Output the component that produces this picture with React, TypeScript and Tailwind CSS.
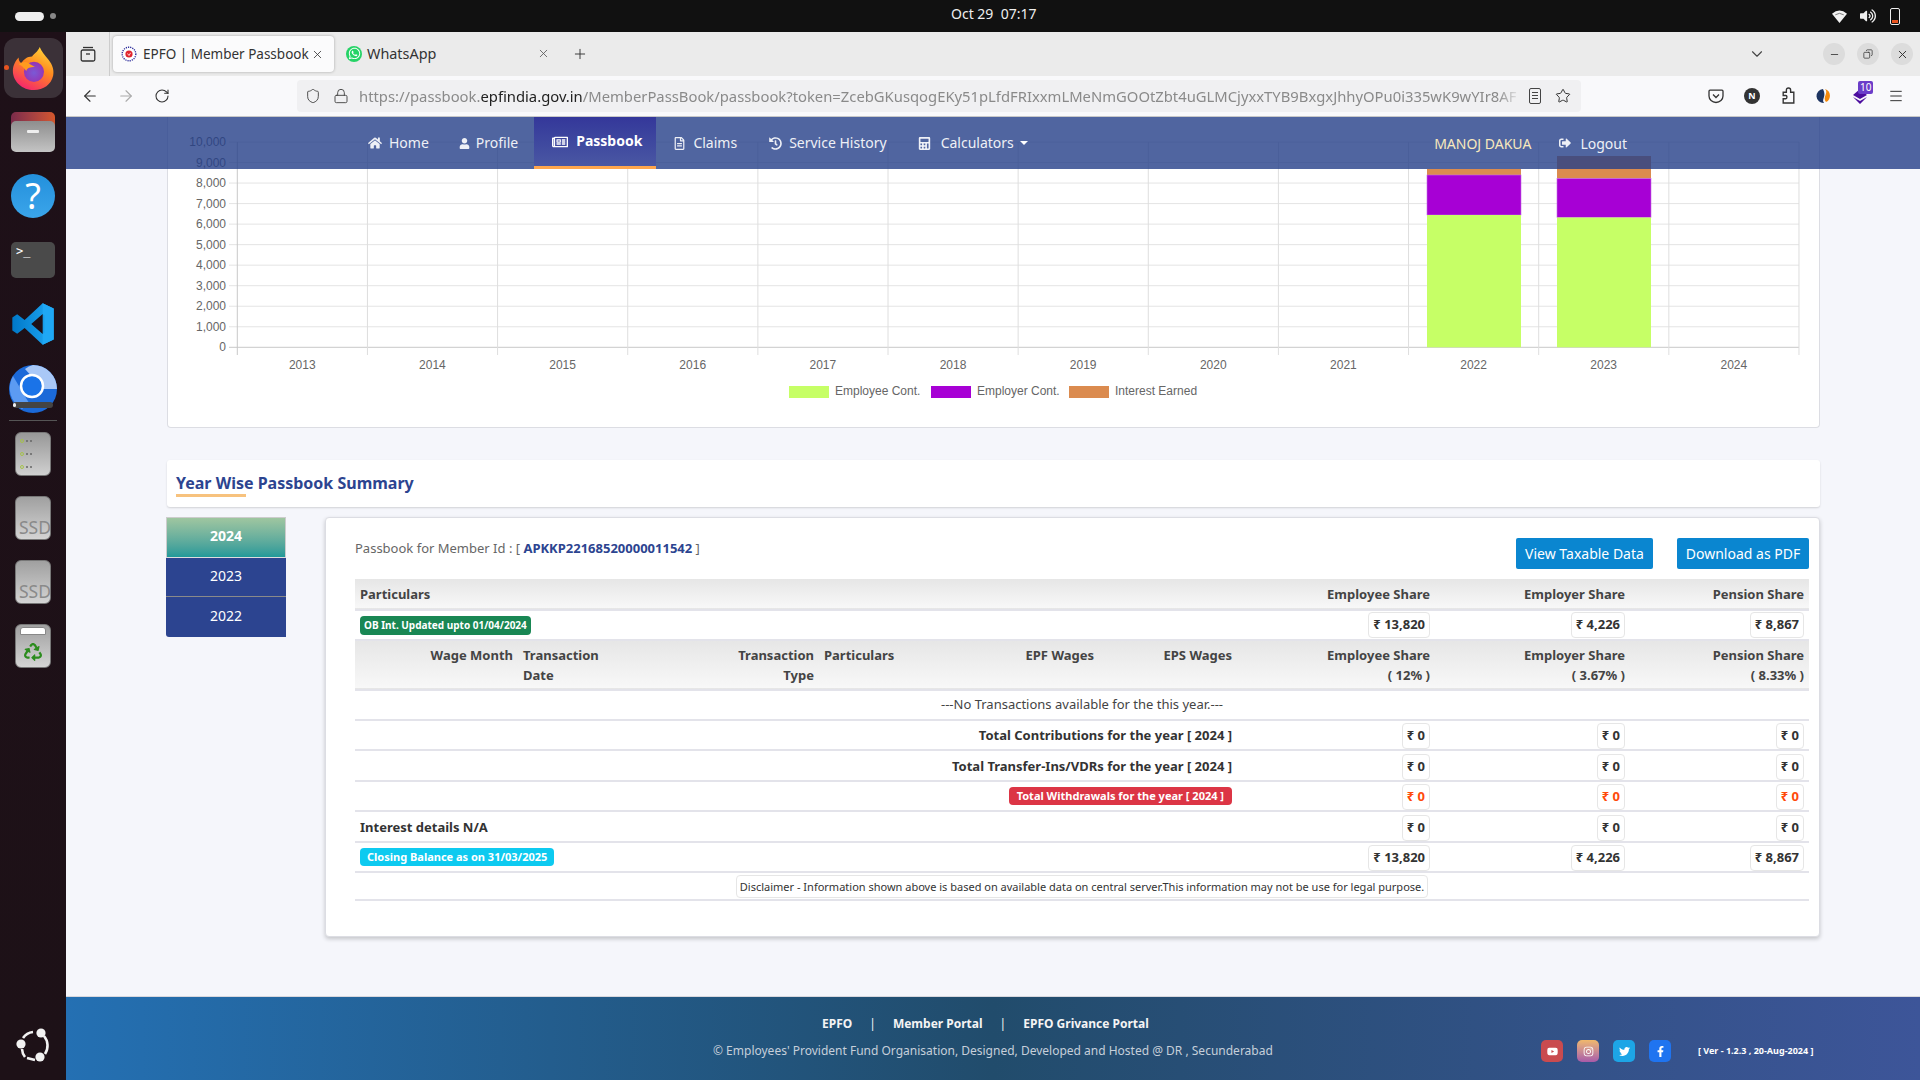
import type { ReactNode } from "react";
import { ArrowLeft, ArrowRight, ChevronDown, Copy, Lock, Menu, Minus, Plus, RotateCw, Shield, Star, X } from "lucide-react";
import {
  FaCalculator,
  FaFacebookF,
  FaHistory,
  FaHome,
  FaInstagram,
  FaRecycle,
  FaRegFileAlt,
  FaRegNewspaper,
  FaSignOutAlt,
  FaTwitter,
  FaUser,
  FaVolumeUp,
  FaWhatsapp,
  FaYoutube,
} from "react-icons/fa";

const years = [2013, 2014, 2015, 2016, 2017, 2018, 2019, 2020, 2021, 2022, 2023, 2024];
const yTicks = [10000, 9000, 8000, 7000, 6000, 5000, 4000, 3000, 2000, 1000, 0];
const bars = [
  { x: 1427, orangeTop: 169, purpleTop: 175, greenTop: 215 },
  { x: 1557, orangeTop: 156, purpleTop: 178.5, greenTop: 217.5 },
];

function FirefoxLogo() {
  return (
    <svg viewBox="0 0 48 48" className="size-[46px]">
      <defs>
        <linearGradient id="ffBody" x1="0.8" y1="0" x2="0.3" y2="1">
          <stop offset="0" stopColor="#ffd93b" />
          <stop offset="0.45" stopColor="#ff8a1f" />
          <stop offset="1" stopColor="#f5246e" />
        </linearGradient>
        <radialGradient id="ffGlobe" cx="0.5" cy="0.55" r="0.6">
          <stop offset="0" stopColor="#7a5ad6" />
          <stop offset="1" stopColor="#9a2fb0" />
        </radialGradient>
      </defs>
      <path d="M31 2c2 5 5 8 9 13 5 6 6 12 5 17-2 9-10 15-20 15C13 47 3 38 3 27c0-6 3-11 6-14 0 3 1 5 3 6 2-4 6-7 11-7 2-3 6-5 8-10z" fill="url(#ffBody)" />
      <circle cx="25" cy="28" r="10.5" fill="url(#ffGlobe)" />
      <path d="M9 20c4-3 9-3 12 0l5 3c-5 0-8 1-9 4-3-4-5-6-8-7z" fill="#ff9b1f" />
    </svg>
  );
}

function VsCodeLogo() {
  return (
    <svg viewBox="0 0 100 100" className="size-[44px]">
      <defs>
        <linearGradient id="vsBlue" x1="0" y1="0" x2="1" y2="0">
          <stop offset="0" stopColor="#0078c8" />
          <stop offset="1" stopColor="#1fa8f5" />
        </linearGradient>
      </defs>
      <path fillRule="evenodd" d="M72 3 L97 15 V85 L72 97 L31 59 L14 72 L3 65 V35 L14 28 L31 41 Z M72 27 L46 50 L72 73 Z" fill="url(#vsBlue)" />
      <path d="M72 3 L97 15 V85 L72 97 Z M72 27 V73 L76 70 V30 Z" fillRule="evenodd" fill="#1fa8f5" />
    </svg>
  );
}

function ChromiumLogo() {
  return (
    <svg viewBox="0 0 48 48" className="size-[48px]">
      <circle cx="24" cy="24" r="24" fill="#1b69d8" />
      <path d="M24 0a24 24 0 0 1 24 24H34L16 4a24 24 0 0 1 8-4z" fill="#a9c8f7" />
      <path d="M4 11 L20 38 L13 44 A24 24 0 0 1 4 11z" fill="#5c9bf2" />
      <circle cx="23" cy="21" r="11" fill="#1a73e8" stroke="#fff" strokeWidth="2.5" />
      <rect x="4" y="37" width="40" height="6" rx="3" fill="#444" />
      <rect x="4" y="38" width="3" height="4" rx="1.5" fill="#eee" />
    </svg>
  );
}

function UbuntuLogo() {
  return (
    <svg viewBox="0 0 36 36" className="size-[36px]">
      <g fill="none" stroke="#f2f2f2" strokeWidth="2.6">
        <path d="M8 11 A14 14 0 0 1 18 5" />
        <path d="M29 9 A15 15 0 0 1 30 27" />
        <path d="M10 30 A14 14 0 0 1 7 22" />
        <path d="M12 31 L20 33" />
      </g>
      <circle cx="26" cy="6" r="4.6" fill="#f2f2f2" />
      <circle cx="6" cy="17" r="4.6" fill="#f2f2f2" />
      <circle cx="25" cy="30" r="4.6" fill="#f2f2f2" />
    </svg>
  );
}

function Drive({ children }: { children?: ReactNode }) {
  return (
    <div className="relative mt-[20px] h-[44px] w-[36px] overflow-hidden rounded-[6px] border border-[#777] bg-gradient-to-b from-[#a0a0a0] to-[#d4d4d4]">
      {children}
    </div>
  );
}

function Dock() {
  return (
    <aside className="flex w-[66px] shrink-0 flex-col items-center bg-gradient-to-b from-[#1e1018] to-[#1d1117]">
      <div className="relative mt-[6px] flex h-[60px] w-[59px] items-center justify-center rounded-[12px] bg-[#3b3138]">
        <FirefoxLogo />
        <span className="absolute left-0 top-[27px] size-[5px] rounded-full bg-[#e95420]" />
      </div>
      <div className="relative mt-[14px] h-[40px] w-[44px]">
        <div className="h-[20px] rounded-t-[5px] bg-gradient-to-r from-[#7b2b4a] to-[#d4572b]" />
        <div className="absolute inset-x-0 bottom-0 top-[9px] flex justify-center rounded-[5px] bg-gradient-to-b from-[#8e8e8e] to-[#c4c4c4]">
          <span className="mt-[9px] h-[3px] w-[12px] rounded-[1px] bg-[#eee]" />
        </div>
      </div>
      <div className="mt-[22px] flex size-[44px] items-center justify-center rounded-full bg-gradient-to-b from-[#2390dc] to-[#3aa5ea] text-[36px] leading-none text-white">?</div>
      <div className="mt-[24px] h-[36px] w-[44px] rounded-[5px] bg-[#4a4a4a] pl-[5px] pt-[2px] font-['DejaVu_Sans_Mono',monospace] text-[12px] leading-[14px] text-white">&gt;_</div>
      <div className="mt-[24px]">
        <VsCodeLogo />
      </div>
      <div className="mt-[19px]">
        <ChromiumLogo />
      </div>
      <div className="mt-[7px] h-px w-[48px] bg-[#555]" />
      <div className="mt-[11px] flex h-[44px] w-[36px] flex-col justify-between rounded-[6px] border border-[#777] bg-gradient-to-b from-[#989898] to-[#d0d0d0] px-[4px] py-[6px]">
        {[0, 1, 2].map((n) => (
          <div key={n} className="flex items-center gap-[2px]">
            <span className="size-[4px] rounded-full border border-[#a6c34a]" />
            <span className="size-[2px] rounded-full bg-[#666]" />
            <span className="size-[2px] rounded-full bg-[#666]" />
          </div>
        ))}
      </div>
      {[0, 1].map((n) => (
        <Drive key={n}>
          <span className="absolute bottom-[1px] left-[3px] text-[17.5px] leading-[22px] text-[#8a8a8a]">SSD</span>
        </Drive>
      ))}
      <Drive>
        <div className="mx-[4px] mt-[2px] h-[8px] rounded-t-[3px] border border-[#888] bg-white" />
        <div className="mt-[8px] flex justify-center">
          <FaRecycle className="size-[18px] text-[#2c8c1e]" />
        </div>
      </Drive>
      <div className="mb-[17px] mt-auto">
        <UbuntuLogo />
      </div>
    </aside>
  );
}

function TopBar() {
  return (
    <header className="relative flex h-[32px] shrink-0 items-center justify-between bg-[#111] pl-[15px] pr-[20px]">
      <div className="flex items-center gap-[6px]">
        <span className="h-[9px] w-[29px] rounded-full bg-[#eee]" />
        <span className="size-[6px] rounded-full bg-[#888]" />
      </div>
      <span className="absolute left-[951px] top-[4px] text-[14px] leading-[20px] text-[#eee]">Oct 29&nbsp;&nbsp;07:17</span>
      <div className="flex items-center gap-[12px] text-[#eee]">
        <svg viewBox="0 0 18 16" className="h-[15px] w-[17px]">
          <path d="M1 5 Q9 -2 17 5 L9 15 Z" fill="#f2f2f2" />
          <path d="M4.5 6.2 Q9 3 13.5 6.2" fill="none" stroke="#555" strokeWidth="0.8" />
        </svg>
        <FaVolumeUp className="size-[16px]" />
        <div className="ml-[2px] flex h-[17px] w-[10px] flex-col justify-end rounded-[2px] border border-[#eee] p-px">
          <span className="h-[3px] bg-[#e95420]" />
        </div>
      </div>
    </header>
  );
}

function EpfoFavicon() {
  return (
    <svg viewBox="0 0 16 16" className="size-[16px] shrink-0">
      <circle cx="8" cy="8" r="6.8" fill="#fff" stroke="#2a2a9a" strokeWidth="1.4" strokeDasharray="1.2 1" />
      <circle cx="8" cy="8" r="3.6" fill="#e0242e" />
      <path d="M6.5 7.5 L8 9.5 L9.6 6.8" fill="none" stroke="#fff" strokeWidth="0.8" />
    </svg>
  );
}

function WindowButton({ children }: { children: ReactNode }) {
  return <span className="flex size-[22px] items-center justify-center rounded-full bg-[#dcdcdc] text-[#333]">{children}</span>;
}

function TabStrip() {
  return (
    <div className="flex h-[44px] shrink-0 items-center bg-[#ebebeb] text-[14px] text-[#333]">
      <div className="flex h-full w-[44px] items-center justify-center border-r border-[#ccc]">
        <svg viewBox="0 0 16 16" className="size-[16px]" fill="none" stroke="#333" strokeWidth="1.3">
          <path d="M3 1.5 H13" />
          <rect x="1.2" y="4" width="13.6" height="11" rx="1.5" />
          <path d="M6 8 H10" />
        </svg>
      </div>
      <div className="relative ml-[3px] flex h-[36px] w-[221px] items-center rounded-[4px] bg-[#fbfbfc] pl-[8px] shadow-[0_0_3px_rgba(0,0,0,0.3)]">
        <EpfoFavicon />
        <span className="ml-[6px] w-[167px] whitespace-nowrap text-[13.5px]">EPFO | Member Passbook</span>
        <X className="ml-[1px] size-[13px] shrink-0" strokeWidth={1.5} />
      </div>
      <div className="flex w-[221px] items-center pl-[12px]">
        <span className="flex size-[16px] items-center justify-center rounded-full bg-[#25d366] text-white">
          <FaWhatsapp className="size-[13px]" />
        </span>
        <span className="ml-[5px] w-[170px] text-[14.4px]">WhatsApp</span>
        <X className="size-[13px] text-[#555]" strokeWidth={1.5} />
      </div>
      <Plus className="ml-[17px] size-[16px]" strokeWidth={1.4} />
      <ChevronDown className="ml-[1160px] size-[18px] text-[#444]" strokeWidth={1.5} />
      <div className="ml-[57px] flex gap-[12px]">
        <WindowButton>
          <Minus className="size-[11px]" strokeWidth={1.8} />
        </WindowButton>
        <WindowButton>
          <Copy className="size-[10px] -scale-x-100" strokeWidth={1.8} />
        </WindowButton>
        <WindowButton>
          <X className="size-[13px]" strokeWidth={1.8} />
        </WindowButton>
      </div>
    </div>
  );
}

function ToolSlot({ children }: { children: ReactNode }) {
  return <span className="relative flex w-[36px] justify-center text-[#333]">{children}</span>;
}

function Toolbar() {
  return (
    <div className="flex h-[41px] shrink-0 items-center border-b border-[#c8c8c8] bg-[#f9f9fb] pb-px pl-[6px]">
      <ToolSlot>
        <ArrowLeft className="size-[18px]" strokeWidth={1.5} />
      </ToolSlot>
      <ToolSlot>
        <ArrowRight className="size-[18px] text-[#aaa]" strokeWidth={1.5} />
      </ToolSlot>
      <ToolSlot>
        <RotateCw className="size-[16px]" strokeWidth={1.6} />
      </ToolSlot>
      <div className="relative ml-[117px] flex h-[32px] w-[1284px] items-center rounded-[4px] bg-[#f0f0f2] pl-[8px] text-[14.8px]">
        <Shield className="size-[16px] shrink-0 text-[#444]" strokeWidth={1.4} />
        <Lock className="ml-[12px] size-[16px] shrink-0 text-[#444]" strokeWidth={1.4} />
        <div className="ml-[10px] w-[1162px] overflow-hidden whitespace-nowrap pt-[2px] text-[#8a8a8a] [mask-image:linear-gradient(to_right,black_98%,transparent)]">
          https://passbook.<span className="text-[#222]">epfindia.gov.in</span>/MemberPassBook/passbook?token=ZcebGKusqogEKy51pLfdFRIxxmLMeNmGOOtZbt4uGLMCjyxxTYB9BxgxJhhyOPu0i335wK9wYIr8AF
        </div>
        <span className="ml-[8px] flex h-[16px] w-[12px] shrink-0 flex-col justify-center gap-[2px] rounded-[2px] border border-[#444] px-[2px]">
          <span className="h-px bg-[#444]" />
          <span className="h-px bg-[#444]" />
          <span className="h-px bg-[#444]" />
        </span>
        <Star className="ml-[14px] size-[16px] shrink-0 text-[#333]" strokeWidth={1.5} />
      </div>
      <div className="ml-[117px] flex items-center">
        <ToolSlot>
          <svg viewBox="0 0 16 16" className="size-[16px]" fill="none" stroke="#333" strokeWidth="1.3">
            <path d="M2 2.2 H14 Q15 2.2 15 3.2 V8 A7 6.5 0 0 1 1 8 V3.2 Q1 2.2 2 2.2 Z" />
            <path d="M5 6.5 L8 9.5 L11 6.5" />
          </svg>
        </ToolSlot>
        <ToolSlot>
          <span className="flex size-[16px] items-center justify-center rounded-full bg-[#333] text-[9px] font-bold text-white">N</span>
        </ToolSlot>
        <ToolSlot>
          <svg viewBox="0 0 16 16" className="size-[17px]" fill="none" stroke="#333" strokeWidth="1.3">
            <path d="M3 5 H6 V3 Q6 1 8 1 Q10 1 10 3 V5 H13 V15 H3 V11 H5.5 Q6.5 11 6.5 9.5 Q6.5 8 5.5 8 H3 Z" />
          </svg>
        </ToolSlot>
        <ToolSlot>
          <svg viewBox="0 0 16 16" className="size-[16px]">
            <path d="M7 1 A7 7 0 0 0 8 15 C5 11 11 9 7 1 Z" fill="#1d3461" />
            <path d="M9 1 C13 5 6 9 10 14 A7 7 0 0 0 9 1 Z" fill="#f58a0b" />
          </svg>
        </ToolSlot>
        <ToolSlot>
          <svg viewBox="0 0 16 16" className="size-[16px]">
            <path d="M8 1 L15 7 L8 11 L1 7 Z M1 9 L8 13 L15 9 L8 16 Z" fill="#4c0d9e" />
          </svg>
          <span className="absolute -top-[7px] left-[16px] h-[13px] rounded-[2px] bg-[#6b3dc9] px-[2px] text-[10px] leading-[13px] text-white">10</span>
        </ToolSlot>
        <ToolSlot>
          <Menu className="size-[16px]" strokeWidth={1.5} />
        </ToolSlot>
      </div>
    </div>
  );
}

function NavItem({ icon, label, className }: { icon: ReactNode; label: string; className: string }) {
  return (
    <div className={`flex h-full items-center ${className}`}>
      {icon}
      <span className="pb-[2px]">{label}</span>
    </div>
  );
}

function NavBar() {
  return (
    <nav className="absolute inset-x-0 top-0 z-10 flex h-[52px] items-center justify-between bg-[#243e88]/80 pl-[288px] pr-[293px] text-[14px] text-[#eef0f6]">
      <div className="flex h-full items-center">
        <NavItem className="gap-[7px] px-[14px]" icon={<FaHome className="size-[14px]" />} label="Home" />
        <NavItem className="ml-[2px] gap-[6px] pl-[14px] pr-[16px]" icon={<FaUser className="size-[11px]" />} label="Profile" />
        <NavItem
          className="gap-[8px] border-b-[3px] border-[#ffa64d] bg-gradient-to-b from-[#34379a] to-[#4a57a3] pl-[18px] pr-[14px] font-bold text-white"
          icon={<FaRegNewspaper className="size-[16px]" />}
          label="Passbook"
        />
        <NavItem className="ml-[3px] gap-[7px] px-[14px]" icon={<FaRegFileAlt className="size-[13px]" />} label="Claims" />
        <NavItem className="ml-[4px] gap-[7px] px-[14px]" icon={<FaHistory className="size-[13px]" />} label="Service History" />
        <div className="ml-[3px] flex h-full items-center pl-[14px]">
          <FaCalculator className="mr-[10px] size-[13px]" />
          <span className="pb-[2px]">Calculators</span>
          <span className="ml-[6px] size-0 border-x-[4px] border-t-[4px] border-x-transparent border-t-white" />
        </div>
      </div>
      <div className="flex items-center">
        <span className="text-[#f8e9bd]">MANOJ DAKUA</span>
        <FaSignOutAlt className="ml-[28px] size-[12px]" />
        <span className="ml-[9px]">Logout</span>
      </div>
    </nav>
  );
}

function ChartCard() {
  const yFor = (v: number) => 347.3 - v * 0.02053;
  const xFor = (i: number) => 237.3 + i * 130.14;
  return (
    <section className="h-[311px] rounded-b-[4px] border-x border-b border-[#dcdde3] bg-white">
      <svg viewBox="168 117 1651 310" className="h-[310px] w-[1651px] font-['Liberation_Sans',sans-serif] text-[12px]" fill="#666">
        {yTicks.map((t) => (
          <g key={t}>
            <line x1="229" x2="1799" y1={yFor(t)} y2={yFor(t)} stroke={t === 0 ? "#c8c8c8" : "#e4e4e4"} strokeWidth="1" />
            <text x="226" y={yFor(t) + 4} textAnchor="end">
              {t.toLocaleString("en-US")}
            </text>
          </g>
        ))}
        {Array.from({ length: 13 }, (_, i) => (
          <line key={i} x1={xFor(i)} x2={xFor(i)} y1="142" y2="355" stroke={i === 0 ? "#c8c8c8" : "#dedede"} strokeWidth="1" />
        ))}
        {years.map((y, i) => (
          <text key={y} x={xFor(i) + 65} y="369" textAnchor="middle">
            {y}
          </text>
        ))}
        {bars.map((b) => (
          <g key={b.x}>
            <rect x={b.x} y={b.orangeTop} width="94" height={b.purpleTop - b.orangeTop} fill="#db8b4f" />
            <rect x={b.x} y={b.purpleTop} width="94" height={b.greenTop - b.purpleTop} fill="#a700d5" stroke="#c46fe4" strokeWidth="0.6" />
            <rect x={b.x} y={b.greenTop} width="94" height={347.3 - b.greenTop} fill="#c6ff66" />
          </g>
        ))}
        <rect x="789" y="386" width="40" height="12" fill="#c6ff66" />
        <text x="835" y="395">Employee Cont.</text>
        <rect x="931" y="386" width="40" height="12" fill="#a700d5" />
        <text x="977" y="395">Employer Cont.</text>
        <rect x="1069" y="386" width="40" height="12" fill="#db8b4f" />
        <text x="1115" y="395">Interest Earned</text>
      </svg>
    </section>
  );
}

function Amount({ value, red }: { value: string; red?: boolean }) {
  return (
    <span className={`inline-flex h-[26px] items-center rounded-[4px] border border-[#e6e6e6] px-[4px] align-middle text-[13px] font-bold ${red ? "text-[#ff4a0a]" : "text-[#333]"}`}>
      ₹ {value}
    </span>
  );
}

function AmountCells({ values, red }: { values: string[]; red?: boolean }) {
  return (
    <>
      {values.map((v, i) => (
        <td key={i} className="px-[5px] text-right">
          <Amount value={v} red={red} />
        </td>
      ))}
    </>
  );
}

const ruleClass = "border-b-2 border-[#e3e3ea]";
const offsetClass = "border-b-2 border-[#e3e3ea] [&>td]:pt-[2px]";
const headClass = "border-b-2 border-[#e3e3ea] bg-gradient-to-b from-[#e6e6e6] to-[#f8f8f8] text-[13px] font-bold text-[#444]";
const zeros = ["0", "0", "0"];
const balances = ["13,820", "4,226", "8,867"];

function PassbookTable() {
  return (
    <table className="mt-[10px] w-[1454px] table-fixed text-[13px] text-[#333]">
      <colgroup>
        <col className="w-[163px]" />
        <col className="w-[182px]" />
        <col className="w-[119px]" />
        <col className="w-[141px]" />
        <col className="w-[139px]" />
        <col className="w-[138px]" />
        <col className="w-[198px]" />
        <col className="w-[195px]" />
        <col className="w-[179px]" />
      </colgroup>
      <tbody>
        <tr className={`h-[31px] [&>td]:pt-[2px] ${headClass}`}>
          <td colSpan={6} className="px-[5px]">Particulars</td>
          <td className="px-[5px] text-right">Employee Share</td>
          <td className="px-[5px] text-right">Employer Share</td>
          <td className="px-[5px] text-right">Pension Share</td>
        </tr>
        <tr className={`h-[30px] ${ruleClass}`}>
          <td colSpan={6} className="px-[5px]">
            <span className="inline-block h-[19px] rounded-[4px] bg-[#198754] px-[4px] align-middle text-[10px] font-bold leading-[19px] text-white">OB Int. Updated upto 01/04/2024</span>
          </td>
          <AmountCells values={balances} />
        </tr>
        <tr className={`h-[50px] leading-[20px] ${headClass}`}>
          <td className="px-[5px] align-top pt-[4px] text-right">Wage Month</td>
          <td className="px-[5px] align-top pt-[4px]">Transaction<br />Date</td>
          <td className="px-[5px] align-top pt-[4px] text-right">Transaction<br />Type</td>
          <td className="px-[5px] align-top pt-[4px]">Particulars</td>
          <td className="px-[5px] align-top pt-[4px] text-right">EPF Wages</td>
          <td className="px-[5px] align-top pt-[4px] text-right">EPS Wages</td>
          <td className="px-[5px] align-top pt-[4px] text-right">Employee Share<br />( 12% )</td>
          <td className="px-[5px] align-top pt-[4px] text-right">Employer Share<br />( 3.67% )</td>
          <td className="px-[5px] align-top pt-[4px] text-right">Pension Share<br />( 8.33% )</td>
        </tr>
        <tr className={`h-[30px] ${ruleClass}`}>
          <td colSpan={9} className="text-center text-[#444]">---No Transactions available for the this year.---</td>
        </tr>
        <tr className={`h-[30px] ${offsetClass}`}>
          <td colSpan={6} className="px-[5px] text-right font-bold">Total Contributions for the year [ 2024 ]</td>
          <AmountCells values={zeros} />
        </tr>
        <tr className={`h-[31px] ${offsetClass}`}>
          <td colSpan={6} className="px-[5px] text-right font-bold">Total Transfer-Ins/VDRs for the year [ 2024 ]</td>
          <AmountCells values={zeros} />
        </tr>
        <tr className={`h-[30px] ${offsetClass}`}>
          <td colSpan={6} className="px-[5px] text-right">
            <span className="mb-[2px] inline-block h-[18px] rounded-[4px] bg-[#dc3545] px-[8px] align-middle text-[11px] font-bold leading-[18px] text-white">Total Withdrawals for the year [ 2024 ]</span>
          </td>
          <AmountCells values={zeros} red />
        </tr>
        <tr className={`h-[31px] ${offsetClass}`}>
          <td colSpan={6} className="px-[5px] font-bold">Interest details N/A</td>
          <AmountCells values={zeros} />
        </tr>
        <tr className={`h-[30px] ${offsetClass}`}>
          <td colSpan={6} className="px-[5px]">
            <span className="mb-[2px] inline-block h-[18px] rounded-[4px] bg-[#0dcaf0] px-[7px] align-middle text-[11px] font-bold leading-[18px] text-white">Closing Balance as on 31/03/2025</span>
          </td>
          <AmountCells values={balances} />
        </tr>
        <tr className={`h-[28px] ${ruleClass}`}>
          <td colSpan={9} className="text-center">
            <span className="inline-block h-[23px] rounded-[4px] border border-[#e6e6e6] px-[3px] align-middle text-[11px] leading-[21px] text-[#333]">
              Disclaimer - Information shown above is based on available data on central server.This information may not be use for legal purpose.
            </span>
          </td>
        </tr>
      </tbody>
    </table>
  );
}

function YearTabs() {
  return (
    <div className="-ml-px w-[120px] shrink-0 text-center text-[14px] text-white">
      <div className="flex h-[40px] items-center justify-center border border-b-0 border-[#ccc] bg-gradient-to-b from-[#9fc6a0] to-[#1e9999] pb-[4px] font-bold">2024</div>
      <div className="flex h-[40px] items-center justify-center border-y border-y-[#ddd] border-b-[#8a8a8a] bg-[#2c4490] pb-[4px]">2023</div>
      <div className="flex h-[40px] items-center justify-center rounded-bl-[3px] bg-[#2c4490] pb-[4px]">2022</div>
    </div>
  );
}

function SummaryCard() {
  return (
    <div className="ml-[39px] h-[420px] w-[1495px] rounded-[4px] border border-[#dcdde3] bg-white pl-[29px] pt-[20px] shadow-[0_2px_4px_rgba(0,0,0,0.2)]">
      <div className="flex h-[31px] w-[1454px] items-start justify-between">
        <p className="pt-[1px] text-[13px] leading-[18px] text-[#666]">
          Passbook for Member Id : [ <span className="font-bold text-[#2c4490]">APKKP22168520000011542</span> ]
        </p>
        <div className="flex gap-[24px] text-[14px] text-white">
          <button className="h-[31px] w-[137px] rounded-[2px] bg-[#0a86d0]">View Taxable Data</button>
          <button className="h-[31px] w-[132px] rounded-[2px] bg-[#0a86d0]">Download as PDF</button>
        </div>
      </div>
      <PassbookTable />
    </div>
  );
}

function SocialIcon({ className, children }: { className: string; children: ReactNode }) {
  return <span className={`flex h-[22px] w-[22px] items-center justify-center rounded-[5px] text-[11px] text-white ${className}`}>{children}</span>;
}

function Footer() {
  return (
    <footer className="relative mt-auto flex h-[84px] shrink-0 flex-col border-t border-[#d8d8de] bg-gradient-to-r from-[#2470b3] via-[#214c6c] to-[#3d5599] text-[12px]">
      <div className="mt-[19px] flex h-[16px] items-center pl-[756px] font-bold text-[#f4f4f4]">
        <span>EPFO</span>
        <span className="mx-[17px] font-normal">|</span>
        <span>Member Portal</span>
        <span className="mx-[17px] font-normal">|</span>
        <span>EPFO Grivance Portal</span>
      </div>
      <div className="mt-[6px] flex h-[26px] items-center pl-[647px]">
        <span className="w-[828px] text-[#c6cfda]">© Employees' Provident Fund Organisation, Designed, Developed and Hosted @ DR , Secunderabad</span>
        <div className="flex gap-[14px]">
          <SocialIcon className="bg-[#c94b4f]">
            <FaYoutube />
          </SocialIcon>
          <SocialIcon className="bg-gradient-to-b from-[#f0b86a] to-[#a85aa8]">
            <FaInstagram />
          </SocialIcon>
          <SocialIcon className="bg-[#1da5e6]">
            <FaTwitter />
          </SocialIcon>
          <SocialIcon className="bg-[#1f74f0]">
            <FaFacebookF />
          </SocialIcon>
        </div>
        <span className="ml-[27px] text-[9px] font-bold text-white">[ Ver - 1.2.3 , 20-Aug-2024 ]</span>
      </div>
    </footer>
  );
}

export default function App() {
  return (
    <div className="flex h-[1080px] w-[1920px] flex-col overflow-hidden font-['Noto_Sans','Liberation_Sans',sans-serif]">
      <TopBar />
      <div className="flex min-h-0 flex-1">
        <Dock />
        <div className="flex min-w-0 flex-1 flex-col">
          <TabStrip />
          <Toolbar />
          <main className="relative flex min-h-0 flex-1 flex-col bg-[#f5f6fb]">
            <NavBar />
            <div className="ml-[101px] mr-[100px]">
              <ChartCard />
              <div className="mt-[32px] flex h-[47px] flex-col justify-center rounded-[3px] bg-white pl-[9px] pt-[2px] shadow-[0_1px_2px_rgba(0,0,0,0.15)]">
                <h2 className="w-fit text-[16px] font-bold leading-[22px] text-[#2c4490]">Year Wise Passbook Summary</h2>
                <span className="h-[3px] w-[70px] bg-[#f7c27e]" />
              </div>
              <div className="mt-[10px] flex">
                <YearTabs />
                <SummaryCard />
              </div>
            </div>
            <Footer />
          </main>
        </div>
      </div>
    </div>
  );
}
